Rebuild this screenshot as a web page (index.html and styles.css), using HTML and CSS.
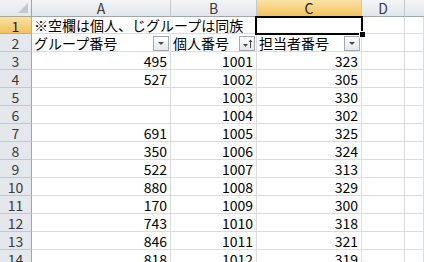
FILE: index.html
```html
<!DOCTYPE html>
<html>
  <head>
    <title>Sheet1</title>
    <link rel="stylesheet" href="styles.css">
  </head>
  <body>
    <div class="sheet">
      <!-- column headers -->
      <div class="corner"><span class="corner-mark"></span></div>
      <div class="col-head">A</div>
      <div class="col-head">B</div>
      <div class="col-head selected">C</div>
      <div class="col-head">D</div>
      <div class="col-head last"></div>

      <!-- row 1 -->
      <div class="row-head selected">1</div>
      <div class="cell spill">※空欄は個人、じグループは同族</div>
      <div class="cell"></div>
      <div class="cell active"><span class="cursor"><span class="handle"></span></span></div>
      <div class="cell"></div>
      <div class="cell"></div>

      <!-- row 2: filter headers -->
      <div class="row-head">2</div>
      <div class="cell title">グループ番号
        <span class="filter"><span class="arrow"></span></span>
      </div>
      <div class="cell title">個人番号
        <span class="filter">
          <svg width="14" height="13" viewBox="0 0 14 13">
            <path d="M3 7h5l-2.5 3z" fill="#4a4a4a"/>
            <path d="M10.5 3v8" stroke="#4a4a4a" stroke-width="1"/>
            <path d="M8.5 5l2-2.5l2 2.5z" fill="#4a4a4a"/>
          </svg>
        </span>
      </div>
      <div class="cell title">担当者番号
        <span class="filter"><span class="arrow"></span></span>
      </div>
      <div class="cell"></div>
      <div class="cell"></div>

      <div class="row-head">3</div><div class="cell num">495</div><div class="cell num">1001</div><div class="cell num">323</div><div class="cell"></div><div class="cell"></div>
      <div class="row-head">4</div><div class="cell num">527</div><div class="cell num">1002</div><div class="cell num">305</div><div class="cell"></div><div class="cell"></div>
      <div class="row-head">5</div><div class="cell num"></div><div class="cell num">1003</div><div class="cell num">330</div><div class="cell"></div><div class="cell"></div>
      <div class="row-head">6</div><div class="cell num"></div><div class="cell num">1004</div><div class="cell num">302</div><div class="cell"></div><div class="cell"></div>
      <div class="row-head">7</div><div class="cell num">691</div><div class="cell num">1005</div><div class="cell num">325</div><div class="cell"></div><div class="cell"></div>
      <div class="row-head">8</div><div class="cell num">350</div><div class="cell num">1006</div><div class="cell num">324</div><div class="cell"></div><div class="cell"></div>
      <div class="row-head">9</div><div class="cell num">522</div><div class="cell num">1007</div><div class="cell num">313</div><div class="cell"></div><div class="cell"></div>
      <div class="row-head">10</div><div class="cell num">880</div><div class="cell num">1008</div><div class="cell num">329</div><div class="cell"></div><div class="cell"></div>
      <div class="row-head">11</div><div class="cell num">170</div><div class="cell num">1009</div><div class="cell num">300</div><div class="cell"></div><div class="cell"></div>
      <div class="row-head">12</div><div class="cell num">743</div><div class="cell num">1010</div><div class="cell num">318</div><div class="cell"></div><div class="cell"></div>
      <div class="row-head">13</div><div class="cell num">846</div><div class="cell num">1011</div><div class="cell num">321</div><div class="cell"></div><div class="cell"></div>
      <div class="row-head">14</div><div class="cell num">818</div><div class="cell num">1012</div><div class="cell num">319</div><div class="cell"></div><div class="cell"></div>
    </div>
  </body>
</html>
```

FILE: styles.css
```css
body {
  margin: 0;
  background: #fff;
  overflow: hidden;
  font-family: "Noto Sans CJK JP", "Noto Sans", sans-serif;
}

.sheet {
  display: grid;
  grid-template-columns: 32px 139px 86px 105px 43px 1fr;
  grid-template-rows: 17px 17px repeat(13, 18px);
  width: 424px;
  height: 262px;
  overflow: hidden;
}

.corner,
.col-head,
.row-head,
.cell {
  box-sizing: border-box;
  border-right: 1px solid #dadcdd;
  border-bottom: 1px solid #dadcdd;
}

.corner {
  position: relative;
  background: linear-gradient(#f1f3f6, #e3e7ec);
  border-right: 1px solid #9ea7b1;
  border-bottom: 1px solid #9ea7b1;
}

.corner-mark {
  position: absolute;
  right: 3px;
  bottom: 3px;
  width: 0;
  height: 0;
  border-left: 10px solid transparent;
  border-bottom: 10px solid #c3c8ce;
}

.col-head {
  display: flex;
  justify-content: center;
  align-items: center;
  background: linear-gradient(#f3f5f8, #e2e6eb);
  border-right: 1px solid #c2c8cf;
  border-bottom: 1px solid #9ea7b1;
  color: #3a3a3a;
  font-size: 14px;
  line-height: 16px;
}

.col-head.last {
  border-right: none;
}

.row-head {
  display: flex;
  justify-content: center;
  align-items: center;
  padding-top: 1px;
  background: #e4e8ed;
  border-right: 1px solid #9ea7b1;
  border-bottom: 1px solid #c2c8cf;
  color: #3a3a3a;
  font-size: 14px;
  line-height: 16px;
}

.col-head.selected,
.row-head.selected {
  background: linear-gradient(#f9e3a6, #f1c25f);
  border-bottom-color: #e2a844;
  color: #222;
}

.row-head.selected {
  border-right-color: #e2a844;
}

.cell {
  display: flex;
  align-items: flex-end;
  padding: 0 3px 0 2px;
  font-size: 14px;
  line-height: 16px;
  color: #000;
  white-space: nowrap;
}

.cell.spill {
  border-right-color: #fff;
  overflow: visible;
  z-index: 1;
}

.cell.num {
  justify-content: flex-end;
}

.cell.title {
  justify-content: space-between;
  align-items: center;
  padding: 1px 1px 0 2px;
}

.filter {
  display: flex;
  justify-content: center;
  align-items: center;
  width: 16px;
  height: 15px;
  box-sizing: border-box;
  border: 1px solid #a2a9b1;
  background: linear-gradient(#ffffff, #e4e7eb);
}

.arrow {
  width: 0;
  height: 0;
  border-left: 3px solid transparent;
  border-right: 3px solid transparent;
  border-top: 3px solid #4a4a4a;
}

.cell.active {
  position: relative;
}

.cursor {
  position: absolute;
  left: -2px;
  top: -1px;
  right: -2px;
  bottom: -2px;
  border: 2px solid #000;
  z-index: 2;
}

.handle {
  position: absolute;
  right: -5px;
  bottom: -5px;
  width: 5px;
  height: 5px;
  background: #000;
  border: 1px solid #fff;
}
```
